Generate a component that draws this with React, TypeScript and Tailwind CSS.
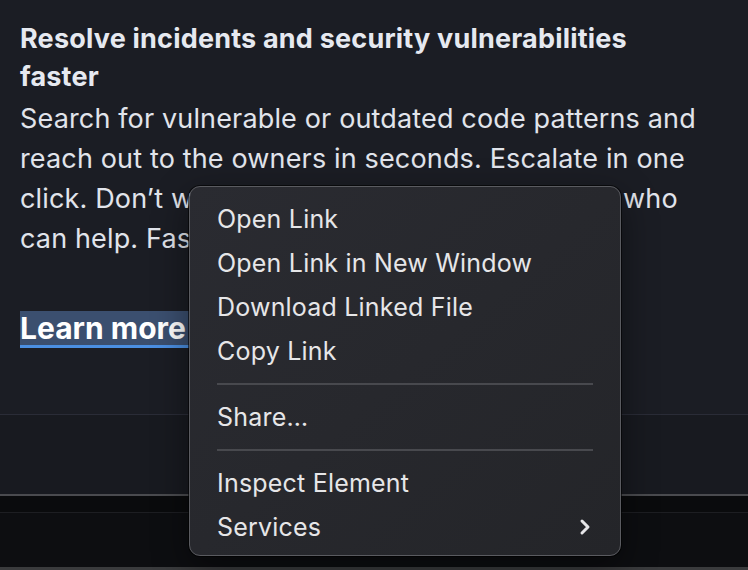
import { ChevronRight } from "lucide-react";

const menuGroups: string[][] = [
    ["Open Link", "Open Link in New Window", "Download Linked File", "Copy Link"],
    ["Share…"],
    ["Inspect Element"],
];

function MenuItem({ label, submenu }: { label: string; submenu?: boolean }) {
    return (
        <div className="h-[44px] flex items-center justify-between pl-[27px] pr-[26px]">
            <span className="text-[25px] text-[#e6e6e8] leading-none tracking-[0.2px]">{label}</span>
            {submenu && <ChevronRight size={24} strokeWidth={3} className="text-[#e6e6e8] -mr-[3px]" />}
        </div>
    );
}

function Separator() {
    return (
        <div className="h-[22px] flex items-center px-[27px]">
            <div className="h-[2px] w-full bg-[#48494e]" />
        </div>
    );
}

function ContextMenu() {
    return (
        <div className="absolute left-[189px] top-[186px] w-[432px] h-[370px] rounded-[11px] border border-[#5a5b60] bg-gradient-to-br from-[#2a2b31] to-[#242529] pt-[10px] shadow-[0_0_0_1px_rgba(0,0,0,0.6),0_12px_36px_rgba(0,0,0,0.45)]">
            {menuGroups[0].map((l) => <MenuItem key={l} label={l} />)}
            <Separator />
            {menuGroups[1].map((l) => <MenuItem key={l} label={l} />)}
            <Separator />
            {menuGroups[2].map((l) => <MenuItem key={l} label={l} />)}
            <MenuItem label="Services" submenu />
        </div>
    );
}

export default function App() {
    return (
        <div className="relative w-[748px] h-[570px] overflow-hidden flex flex-col bg-[#0d0e11] font-['Inter',sans-serif]">
            <div className="h-[415px] shrink-0 bg-[#1b1d24] border-b border-[#2a2c37] px-[20px] pt-[20px]">
                <h3 className="text-[27px] leading-[38px] font-bold tracking-[0.2px] text-[#e6e9f0]">
                    Resolve incidents and security vulnerabilities<br />faster
                </h3>
                <p className="text-[27px] leading-[40px] tracking-[0.15px] text-[#e1e4eb] whitespace-nowrap mt-[3px]">
                    Search for vulnerable or outdated code patterns and<br />
                    reach out to the owners in seconds. Escalate in one<br />
                    click. Don’t wait around hunting for the people who<br />
                    can help. Fast-track every fix.
                </p>
                <div className="mt-[52px] h-[36px] flex items-center">
                    <a href="#" className="inline-block bg-[#3b4f6f] text-[30px] leading-[34px] font-bold text-white border-b-[3px] border-[#4b8fe2] pr-[30px]">
                        Learn more
                    </a>
                </div>
            </div>
            <div className="h-[79px] shrink-0 bg-[#181a20]" />
            <div className="h-[2px] shrink-0 bg-[#4a4b4f]" />
            <div className="h-[16px] shrink-0 bg-[#0a0b0d]" />
            <div className="h-px shrink-0 bg-[#1d1e22]" />
            <div className="flex-1 bg-[#0d0e11]" />
            <div className="h-[3px] shrink-0 bg-[#3a3b3d]" />
            <ContextMenu />
        </div>
    );
}
